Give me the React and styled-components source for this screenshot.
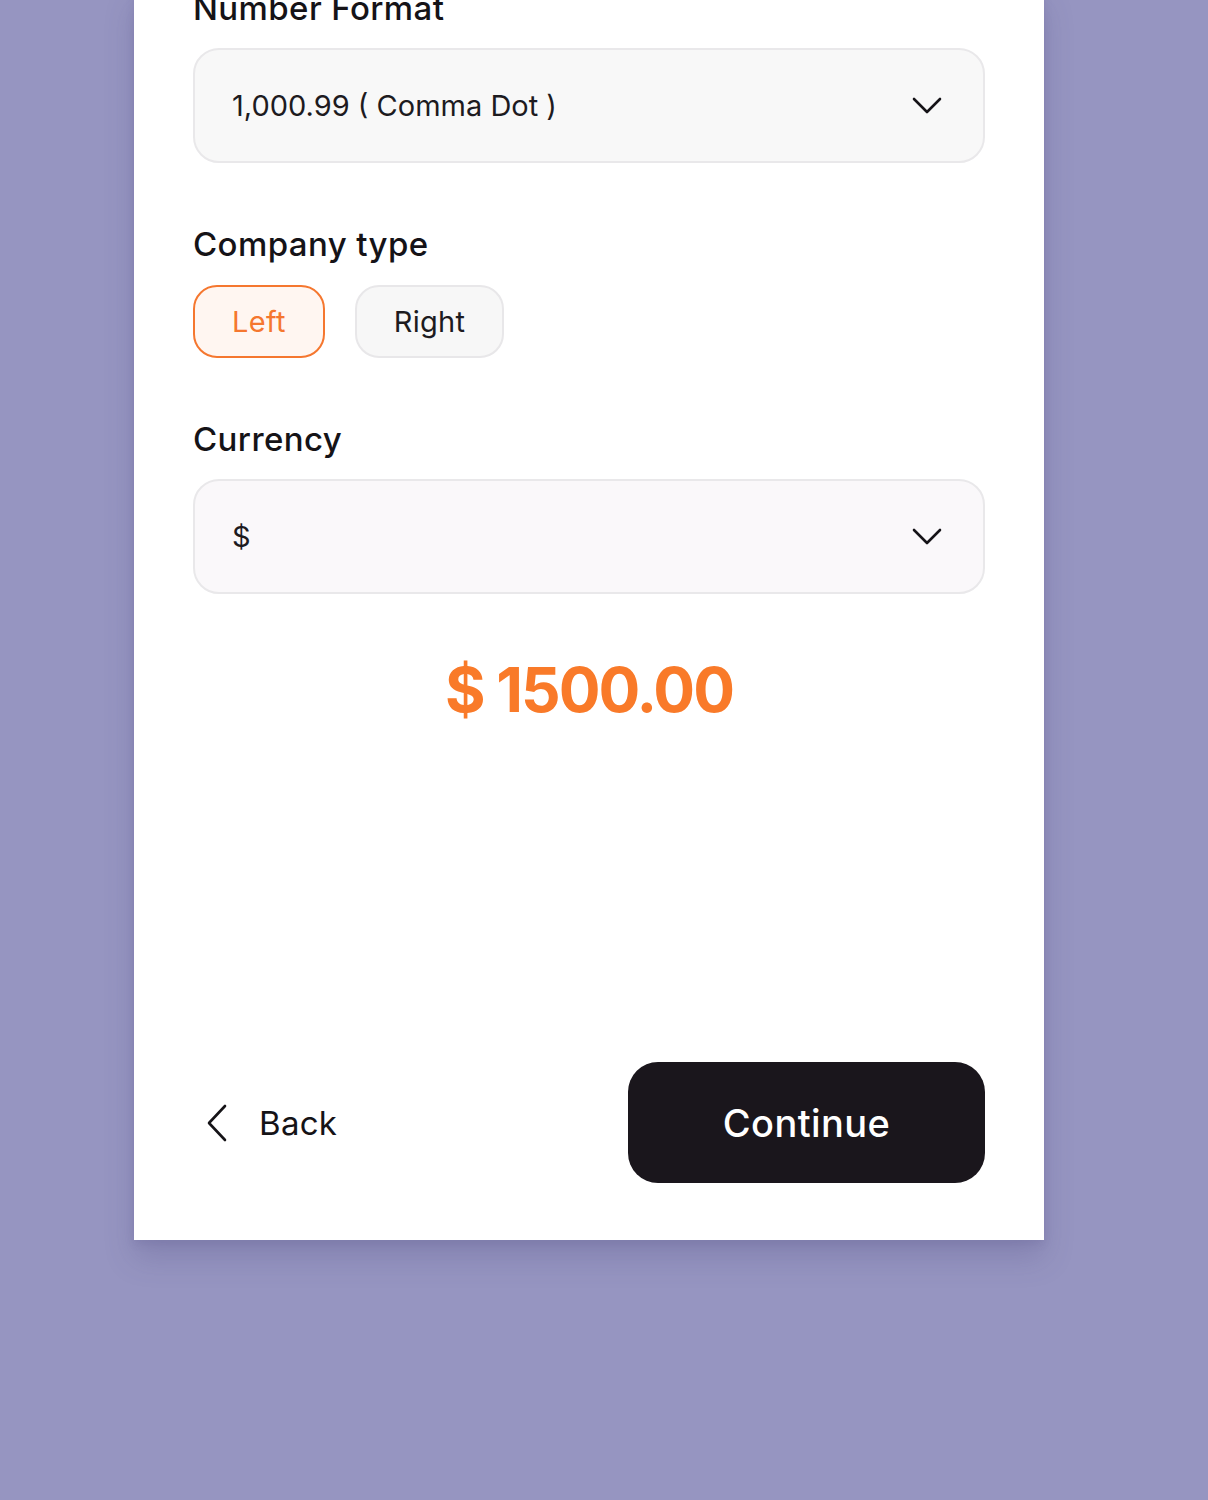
import React, { useState } from "react";
import styled, { createGlobalStyle } from "styled-components";

const GlobalStyle = createGlobalStyle`
  html, body {
    margin: 0;
    padding: 0;
    background: #9695c1;
    font-family: Inter, "Noto Sans", "Liberation Sans", sans-serif;
    color: #151317;
    overflow: hidden;
  }
  * {
    box-sizing: border-box;
  }
`;

const Page = styled.div`
  width: 1208px;
  height: 1500px;
  padding-left: 134px;
`;

const Card = styled.div`
  width: 910px;
  margin-top: -11px;
  padding: 0 59px 57px;
  background: #ffffff;
  box-shadow: 0 18px 28px rgba(70, 66, 120, 0.22), 0 4px 8px rgba(70, 66, 120, 0.12);
  display: flex;
  flex-direction: column;
`;

const Label = styled.div`
  font-size: 33px;
  line-height: 39px;
  font-weight: 500;
  letter-spacing: 0.4px;
  margin-top: ${(p) => p.$top || 0}px;
`;

const Select = styled.div`
  margin-top: 20px;
  height: 115px;
  border: 2px solid #e9e8ea;
  border-radius: 26px;
  background: ${(p) => p.$bg || "#f8f8f8"};
  display: flex;
  align-items: center;
  justify-content: space-between;
  padding: 0 41px 0 37px;
  font-size: 29px;
  letter-spacing: 0;
  color: #1d1b1f;
`;

const Toggles = styled.div`
  display: flex;
  gap: 30px;
  margin-top: 21px;
`;

const Toggle = styled.button`
  height: 73px;
  padding: 0 37px;
  border-radius: 24px;
  font-family: inherit;
  font-size: 29px;
  font-weight: 400;
  letter-spacing: 0.3px;
  cursor: pointer;
  border: ${(p) => (p.$active ? "2.5px solid #f5772f" : "2px solid #e8e7e9")};
  background: ${(p) => (p.$active ? "#fff6f1" : "#f7f7f7")};
  color: ${(p) => (p.$active ? "#f5772f" : "#1d1b1f")};
`;

const Amount = styled.div`
  margin-top: 54px;
  text-align: center;
  font-size: 62px;
  line-height: 84px;
  font-weight: 700;
  letter-spacing: -2px;
  color: #f97a29;
`;

const Footer = styled.div`
  margin-top: 330px;
  display: flex;
  align-items: center;
  justify-content: space-between;
`;

const BackLink = styled.button`
  display: flex;
  align-items: center;
  gap: 30px;
  padding: 0 0 0 12px;
  border: none;
  background: none;
  font-family: inherit;
  font-size: 33px;
  letter-spacing: 0.3px;
  color: #151317;
  cursor: pointer;
`;

const Continue = styled.button`
  width: 357px;
  height: 121px;
  border: none;
  border-radius: 30px;
  background: #1a161c;
  color: #ffffff;
  font-family: inherit;
  font-size: 38px;
  font-weight: 500;
  letter-spacing: 0.4px;
  cursor: pointer;
`;

const Chevron = () => (
  <svg width="30" height="18" viewBox="0 0 30 18" fill="none">
    <path d="M2 2 L15 15 L28 2" stroke="#151317" strokeWidth="2.6" strokeLinecap="round" strokeLinejoin="round" />
  </svg>
);

const BackArrow = () => (
  <svg width="24" height="38" viewBox="0 0 24 38" fill="none">
    <path d="M20 2 L4 19 L20 36" stroke="#151317" strokeWidth="2.6" strokeLinecap="round" strokeLinejoin="round" />
  </svg>
);

const App = () => {
  const [side, setSide] = useState("left");

  return (
    <>
      <GlobalStyle />
      <Page>
        <Card>
          <Label>Number Format</Label>
          <Select>
            <span>1,000.99 ( Comma Dot )</span>
            <Chevron />
          </Select>

          <Label $top={62}>Company type</Label>
          <Toggles>
            <Toggle $active={side === "left"} onClick={() => setSide("left")}>
              Left
            </Toggle>
            <Toggle $active={side === "right"} onClick={() => setSide("right")}>
              Right
            </Toggle>
          </Toggles>

          <Label $top={62}>Currency</Label>
          <Select $bg="#faf8fa">
            <span>$</span>
            <Chevron />
          </Select>

          <Amount>$ 1500.00</Amount>

          <Footer>
            <BackLink>
              <BackArrow />
              Back
            </BackLink>
            <Continue>Continue</Continue>
          </Footer>
        </Card>
      </Page>
    </>
  );
};

export default App;
